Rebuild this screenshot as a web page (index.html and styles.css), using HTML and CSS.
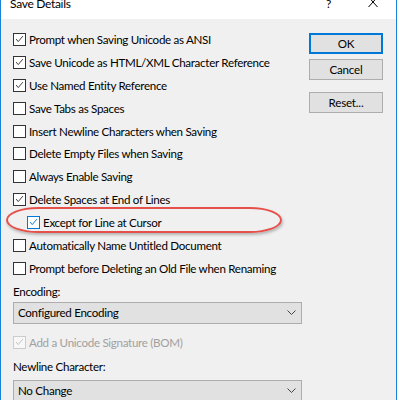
FILE: index.html
```html
<!DOCTYPE html>
<html>
<head>
<meta charset="utf-8">
<link rel="stylesheet" href="styles.css">
</head>
<body>
<div class="window">
  <div class="titlebar">
    <span class="title">Save Details</span>
    <span class="help">?</span>
    <svg class="close" width="10" height="10" viewBox="0 0 10 10"><path d="M0.5 -3 L9.5 7 M9.5 -3 L0.5 7" stroke="#000" stroke-width="1" fill="none"/></svg>
  </div>
  <div class="content">
    <div class="main">
      <div class="left">
        <div class="options">
          <label class="row"><span class="box checked"><svg viewBox="0 0 13 13"><path d="M2.5 6 L5 9 L10.5 2.5"/></svg></span>Prompt when Saving Unicode as ANSI</label>
          <label class="row"><span class="box checked"><svg viewBox="0 0 13 13"><path d="M2.5 6 L5 9 L10.5 2.5"/></svg></span>Save Unicode as HTML/XML Character Reference</label>
          <label class="row"><span class="box checked"><svg viewBox="0 0 13 13"><path d="M2.5 6 L5 9 L10.5 2.5"/></svg></span>Use Named Entity Reference</label>
          <label class="row"><span class="box"></span>Save Tabs as Spaces</label>
          <label class="row"><span class="box"></span>Insert Newline Characters when Saving</label>
          <label class="row"><span class="box"></span>Delete Empty Files when Saving</label>
          <label class="row"><span class="box"></span>Always Enable Saving</label>
          <label class="row"><span class="box checked"><svg viewBox="0 0 13 13"><path d="M2.5 6 L5 9 L10.5 2.5"/></svg></span>Delete Spaces at End of Lines</label>
          <label class="row indent"><span class="box checked hover"><svg viewBox="0 0 13 13"><path d="M2.5 6 L5 9 L10.5 2.5"/></svg></span>Except for Line at Cursor</label>
          <label class="row"><span class="box"></span>Automatically Name Untitled Document</label>
          <label class="row"><span class="box"></span>Prompt before Deleting an Old File when Renaming</label>
        </div>
        <div class="field-label">Encoding:</div>
        <div class="select"><span>Configured Encoding</span><svg class="chev" width="9" height="5" viewBox="0 0 9 5"><path d="M0.5 0.5 L4.5 4.5 L8.5 0.5" stroke="#444" fill="none" stroke-width="1"/></svg></div>
        <label class="row disabled bom"><span class="box checked"><svg viewBox="0 0 13 13"><path d="M2.5 6 L5 9 L10.5 2.5"/></svg></span>Add a Unicode Signature (BOM)</label>
        <div class="field-label nl">Newline Character:</div>
        <div class="select sel2"><span>No Change</span><svg class="chev" width="9" height="5" viewBox="0 0 9 5"><path d="M0.5 0.5 L4.5 4.5 L8.5 0.5" stroke="#444" fill="none" stroke-width="1"/></svg></div>
      </div>
      <div class="buttons">
        <button class="btn default">OK</button>
        <button class="btn">Cancel</button>
        <button class="btn reset">Reset...</button>
      </div>
    </div>
    <div class="annotation"></div>
  </div>
</div>
</body>
</html>
```
FILE: styles.css
```css
html, body {
  margin: 0;
  padding: 0;
  background: #fff;
}
body {
  width: 398px;
  height: 400px;
  overflow: hidden;
  font-family: Lato, "Noto Sans", sans-serif;
  font-size: 11.6px;
  letter-spacing: -0.3px;
  color: #000;
}
.window {
  width: 395px;
  height: 400px;
  border-left: 1px solid #1883d7;
  border-right: 1px solid #1883d7;
  box-sizing: content-box;
  display: flex;
  flex-direction: column;
  overflow: hidden;
}
.titlebar {
  height: 19px;
  background: #fff;
  display: flex;
  align-items: flex-start;
  position: relative;
  flex: none;
}
.title {
  margin-left: 9px;
  margin-top: -4px;
  line-height: 15px;
  font-size: 12px;
}
.help {
  margin-left: auto;
  margin-top: -4px;
  line-height: 15px;
  font-size: 12px;
  margin-right: 37px;
}
.close {
  margin-right: 18px;
  margin-top: 0;
}
.content {
  flex: 1;
  background: #f0f0f0;
  position: relative;
  padding: 9px 0 0 12px;
}
.main {
  display: flex;
  align-items: flex-start;
}
.left {
  width: 289px;
  display: flex;
  flex-direction: column;
}
.options {
  display: flex;
  flex-direction: column;
}
.row {
  display: flex;
  align-items: center;
  height: 22.9px;
  white-space: nowrap;
}
.row.indent {
  padding-left: 14px;
}
.box {
  width: 11px;
  height: 11px;
  border: 1px solid #333;
  background: #fff;
  margin-right: 3px;
  flex: none;
  display: flex;
}
.box svg {
  width: 11px;
  height: 11px;
  margin: 0;
}
.box svg path {
  fill: none;
  stroke: #333;
  stroke-width: 1.1;
}
.box.hover {
  border-color: #0078d7;
}
.box.hover svg path {
  stroke: #0078d7;
}
.disabled {
  color: #a0a0a0;
}
.disabled .box {
  border-color: #cccccc;
  background: #f8f8f8;
}
.disabled .box svg path {
  stroke: #c0c0c0;
}
.field-label {
  margin-top: 4px;
  height: 16px;
  line-height: 16px;
}
.select {
  margin-top: 2px;
  height: 20px;
  border: 1px solid #adadad;
  background: #e1e1e1;
  display: flex;
  align-items: center;
  padding: 0 5px 0 4px;
}
.select.sel2 {
  margin-top: 5px;
}
.select span {
  flex: 1;
}
.bom {
  margin-top: 7px;
}
.nl {
  margin-top: 5px;
}
.buttons {
  margin-left: 7px;
  margin-top: 5px;
  display: flex;
  flex-direction: column;
}
.btn {
  width: 74px;
  height: 21px;
  border: 1px solid #adadad;
  background: #e1e1e1;
  font-family: inherit;
  font-size: 11.6px;
  letter-spacing: -0.2px;
  color: #000;
  padding: 0;
  margin: 0 0 5px 0;
  line-height: 18px;
}
.btn.default {
  border: 2px solid #0078d7;
}
.btn.reset {
  margin-top: 7px;
}
.annotation {
  position: absolute;
  left: 5px;
  top: 188px;
  width: 272px;
  height: 22px;
  border: 2.5px solid #e5504b;
  border-radius: 32px / 13px;
  box-shadow: 1px 2px 3px rgba(0, 0, 0, 0.25);
}
```
